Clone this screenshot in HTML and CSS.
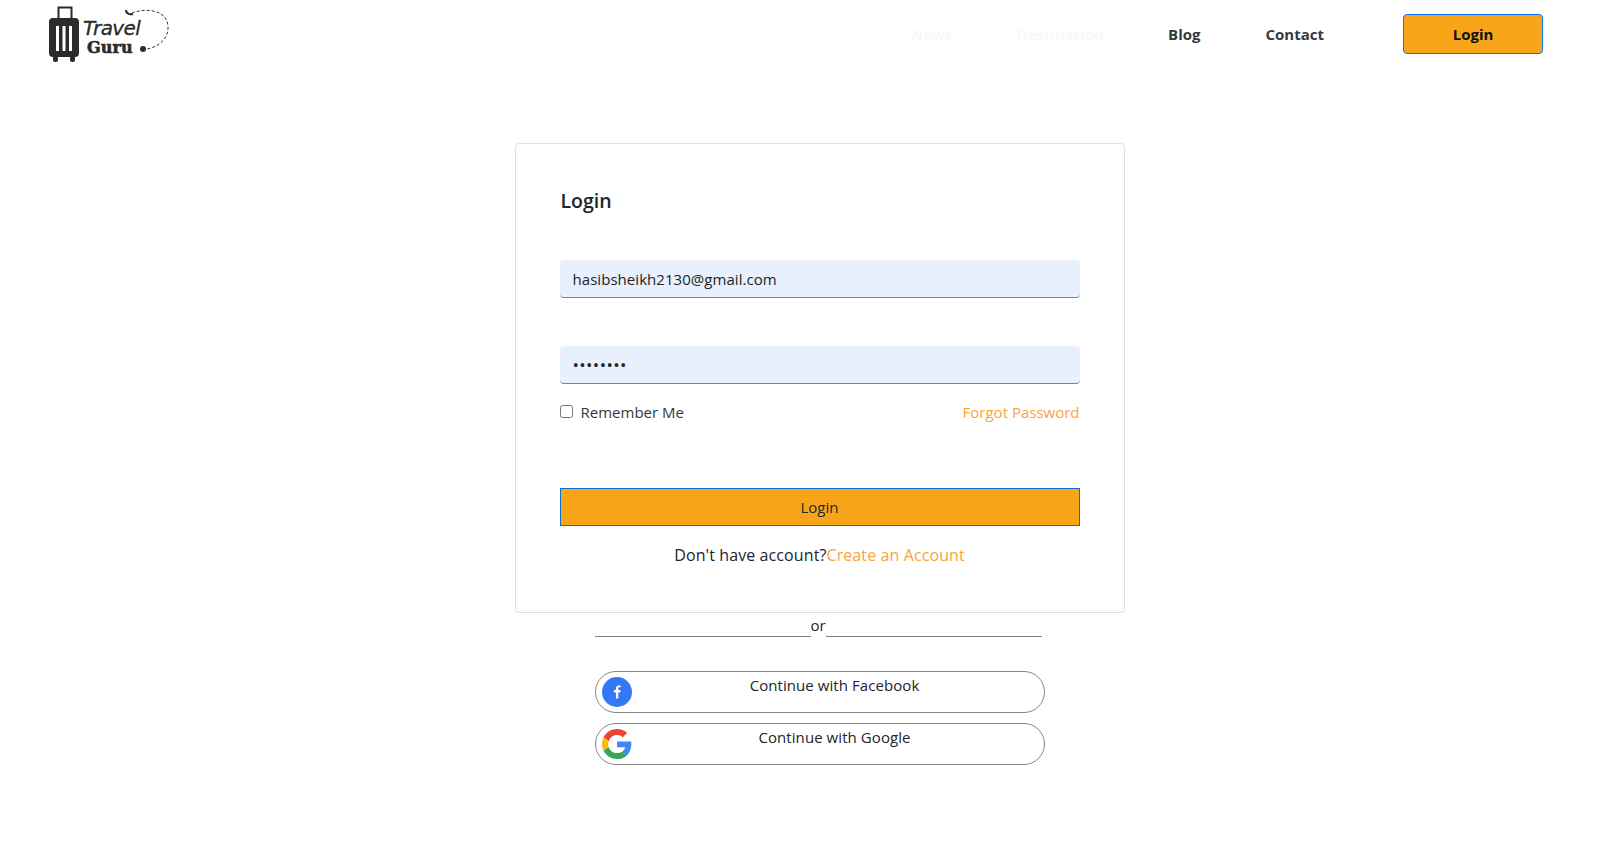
FILE: index.html
```html
<!DOCTYPE html>
<html lang="en">
<head>
<meta charset="utf-8">
<title>Travel Guru - Login</title>
<link rel="stylesheet" href="styles.css">
</head>
<body>
<header class="header">
  <a class="logo" href="#">
    <svg width="122" height="58" viewBox="0 0 122 58" aria-label="Travel Guru">
      <path d="M10.500 13V2.500h13V13" fill="none" stroke="#2b2b2b" stroke-width="2"/>
      <rect x="1" y="13" width="30" height="39" rx="4" fill="#2b2b2b"/>
      <rect x="8" y="21" width="3" height="25" fill="#fff"/>
      <rect x="14.500" y="21" width="3" height="25" fill="#fff"/>
      <rect x="21" y="21" width="3" height="25" fill="#fff"/>
      <rect x="5" y="51" width="5" height="6" rx="2" fill="#2b2b2b"/>
      <rect x="22" y="51" width="5" height="6" rx="2" fill="#2b2b2b"/>
      <path d="M84 8C96 3 119 4 120 21C121 34 110 42 99 44" fill="none" stroke="#333" stroke-width="1" stroke-dasharray="3 2"/>
      <path d="M78 5C78 8 81 10 85 9" fill="none" stroke="#222" stroke-width="2"/>
      <circle cx="95" cy="44" r="3" fill="#2b2b2b"/>
      <text x="35" y="30" class="logo-travel">Travel</text>
      <text x="39" y="48" class="logo-guru">Guru</text>
    </svg>
  </a>
  <nav class="nav">
    <a class="nav-link faint" href="#">News</a>
    <a class="nav-link faint" href="#">Destination</a>
    <a class="nav-link" href="#">Blog</a>
    <a class="nav-link" href="#">Contact</a>
    <button class="nav-login" type="button">Login</button>
  </nav>
</header>

<main class="main">
  <form class="card">
    <h1 class="card-title">Login</h1>
    <input class="field" type="text" value="hasibsheikh2130@gmail.com" aria-label="Email">
    <input class="field field-pass" type="password" value="12345678" aria-label="Password">
    <div class="options">
      <label class="remember"><input class="check" type="checkbox">Remember Me</label>
      <a class="link" href="#">Forgot Password</a>
    </div>
    <button class="submit" type="button">Login</button>
    <p class="signup">Don't have account?<a class="link" href="#">Create an Account</a></p>
  </form>

  <div class="divider"><span class="rule"></span><span class="or">or</span><span class="rule"></span></div>

  <div class="socials">
    <button class="social" type="button">
      <svg class="social-icon" viewBox="0 0 30 30" aria-hidden="true">
        <circle cx="15" cy="15" r="15" fill="#3578f6"/>
        <path d="M16.300 21.500v-6.100h2l.3-2.400h-2.300v-1.500c0-.7.200-1.150 1.200-1.150h1.250V8.700c-.2-.05-.95-.1-1.800-.1-1.800 0-3 1.100-3 3.050V13h-2v2.400h2v6.100z" fill="#fff"/>
      </svg>
      <span class="social-text">Continue with Facebook</span>
    </button>
    <button class="social" type="button">
      <svg class="social-icon" viewBox="0 0 48 48" aria-hidden="true">
        <path fill="#ea4335" d="M24 9.500c3.900 0 6.900 1.300 9.300 3.500l6.900-6.900C36 2.300 30.500 0 24 0 14.600 0 6.500 5.400 2.600 13.200l8 6.200C12.500 13.600 17.800 9.500 24 9.500z"/>
        <path fill="#4285f4" d="M47 24.500c0-1.600-.15-3.100-.4-4.500H24v9h13c-.55 3-2.300 5.500-4.800 7.200l7.700 6C44.400 37.900 47 31.800 47 24.500z"/>
        <path fill="#fbbc05" d="M10.600 28.600C10.100 27.200 9.800 25.600 9.800 24s.3-3.200.8-4.600l-8-6.200C.9 16.400 0 20.100 0 24s.9 7.600 2.600 10.800z"/>
        <path fill="#34a853" d="M24 48c6.500 0 11.900-2.100 15.900-5.800l-7.700-6c-2.200 1.400-4.900 2.300-8.200 2.300-6.200 0-11.500-4.100-13.400-9.900l-8 6.200C6.500 42.600 14.600 48 24 48z"/>
      </svg>
      <span class="social-text">Continue with Google</span>
    </button>
  </div>
</main>
</body>
</html>
```

FILE: styles.css
```css
* { box-sizing: border-box; }

html, body { margin: 0; padding: 0; }

body {
  background: #fff;
  color: #212529;
  font-family: "Open Sans", "Noto Sans", sans-serif;
  font-size: 15px;
  height: 858px;
  overflow: hidden;
}

a { text-decoration: none; }

.header {
  display: flex;
  align-items: flex-start;
  justify-content: space-between;
  height: 143px;
  padding: 5px 56px 0 48px;
}

.logo { display: block; height: 58px; }

.logo-travel {
  font-family: "DejaVu Sans", sans-serif;
  font-style: italic;
  font-size: 20px;
  letter-spacing: -.6px;
  fill: #2b2b2b;
  stroke: #2b2b2b;
  stroke-width: .3px;
}

.logo-guru {
  font-family: "DejaVu Serif", serif;
  font-weight: 700;
  font-size: 16px;
  letter-spacing: .1px;
  fill: #2b2b2b;
  stroke: #2b2b2b;
  stroke-width: .6px;
}

.nav {
  display: flex;
  align-items: center;
  margin-top: 9px;
  height: 40px;
}

.nav-link {
  color: #343a40;
  font-weight: 700;
  font-size: 15px;
  margin-right: 64px;
}

.nav-link.faint { color: #f8f9fa; }

.nav-link:nth-child(3) { margin-right: 65px; }

.nav-link:nth-child(4) { margin-right: 79px; }

.nav-login {
  width: 140px;
  height: 40px;
  background: #f9a51a;
  border: 1px solid #007bff;
  border-radius: 4px;
  color: #111;
  font: 700 15px "Open Sans", sans-serif;
}

.main {
  display: flex;
  flex-direction: column;
  align-items: center;
  padding-left: 41px;
}

.card {
  width: 610px;
  height: 470px;
  margin-left: -1px;
  padding: 43px 44px 0;
  border: 1px solid #dfdfdf;
  border-radius: 4px;
  display: flex;
  flex-direction: column;
}

.card-title {
  margin: 0 0 45px 1px;
  font-size: 19.500px;
  line-height: 28px;
  font-weight: 600;
  color: #212529;
}

.field {
  display: block;
  width: 100%;
  height: 38px;
  padding: 0 13px;
  background: #e8f0fe;
  border: 0;
  border-bottom: 1px solid #80838a;
  border-radius: 4px;
  color: #212529;
  font: 15px "Open Sans", sans-serif;
  letter-spacing: .05px;
  outline: none;
}

.field-pass {
  margin-top: 48px;
  font-size: 17px;
  letter-spacing: .4px;
}

.options {
  display: flex;
  justify-content: space-between;
  align-items: center;
  margin-top: 18px;
  line-height: 20px;
  height: 20px;
  color: #343a40;
}

.remember { display: flex; align-items: center; }

.check {
  width: 13px;
  height: 13px;
  margin: -1px 8px 0 0;
}

.link { color: #f9a240; }

.submit {
  display: block;
  width: 100%;
  height: 38px;
  margin-top: 66px;
  background: #f9a51a;
  border: 1px solid #0a6fd6;
  color: #212529;
  font: 15px "Open Sans", sans-serif;
}

.signup {
  margin: 18px 0 0;
  text-align: center;
  font-size: 16px;
  line-height: 22px;
  letter-spacing: .1px;
}

.divider {
  display: flex;
  align-items: flex-end;
  width: 451px;
  margin-top: 4px;
  height: 20px;
}

.rule {
  width: 216px;
  border-bottom: 1px solid #808080;
}

.or {
  width: 15px;
  text-align: center;
  line-height: 18px;
  margin-bottom: 3px;
}

.socials {
  display: flex;
  flex-direction: column;
  gap: 10px;
  width: 451px;
  margin-top: 34px;
}

.social {
  display: flex;
  align-items: flex-start;
  width: 450px;
  height: 42px;
  padding: 4px 6px;
  background: #fff;
  border: 1px solid #868686;
  border-radius: 21px;
  color: #212529;
  font: 15px "Open Sans", sans-serif;
  letter-spacing: .07px;
}

.social-icon {
  width: 30px;
  height: 30px;
  flex: none;
  margin-top: 1px;
}

.social-text {
  flex: 1;
  text-align: center;
  line-height: 18px;
}
```
